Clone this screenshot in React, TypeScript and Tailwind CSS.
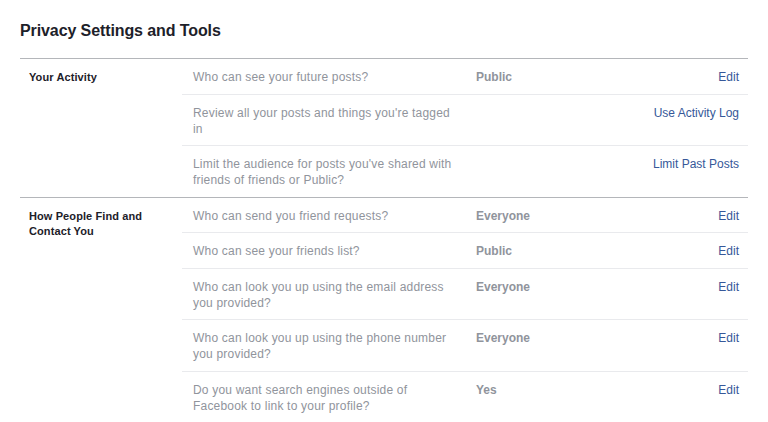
import React from 'react';

interface Row {
  question: string;
  value?: string;
  action: string;
}

interface Section {
  title: string;
  rows: Row[];
}

const sections: Section[] = [
  {
    title: 'Your Activity',
    rows: [
      { question: 'Who can see your future posts?', value: 'Public', action: 'Edit' },
      { question: "Review all your posts and things you're tagged in", action: 'Use Activity Log' },
      { question: "Limit the audience for posts you've shared with friends of friends or Public?", action: 'Limit Past Posts' },
    ],
  },
  {
    title: 'How People Find and Contact You',
    rows: [
      { question: 'Who can send you friend requests?', value: 'Everyone', action: 'Edit' },
      { question: 'Who can see your friends list?', value: 'Public', action: 'Edit' },
      { question: 'Who can look you up using the email address you provided?', value: 'Everyone', action: 'Edit' },
      { question: 'Who can look you up using the phone number you provided?', value: 'Everyone', action: 'Edit' },
      { question: 'Do you want search engines outside of Facebook to link to your profile?', value: 'Yes', action: 'Edit' },
    ],
  },
];

export default function App() {
  return (
    <div
      className="min-h-screen bg-white px-[20px] pt-[21px]"
      style={{ fontFamily: '"Liberation Sans", Arial, sans-serif' }}
    >
      <h2 className="text-[16px] leading-[20px] font-bold tracking-[-0.1px] text-[#1d2129] mb-[17px]">
        Privacy Settings and Tools
      </h2>

      <div className="w-[728px]">
        {sections.map((section) => (
          <div key={section.title} className="flex border-t border-[#b4b6ba]">
            {/* Section label */}
            <div className="w-[162px] shrink-0 pl-[9px] pt-[11px] text-[11px] leading-[15px] font-bold tracking-[0.1px] text-[#1d2129]">
              <div className="w-[130px]">{section.title}</div>
            </div>

            {/* Rows */}
            <div className="flex-1">
              {section.rows.map((row, i) => (
                <div
                  key={row.question}
                  className={`flex pt-[10px] pb-[8.5px] text-[12px] leading-[16px] ${
                    i < section.rows.length - 1 ? 'border-b border-[#e9eaed]' : ''
                  }`}
                >
                  <div className="w-[294px] shrink-0 pl-[11px] pr-[18px] tracking-[0.2px] text-[#90949c]">
                    {row.question}
                  </div>
                  <div className="w-[120px] shrink-0 font-bold text-[#90949c]">{row.value}</div>
                  <div className="flex-1 text-right pr-[9px] text-[#365899]">{row.action}</div>
                </div>
              ))}
            </div>
          </div>
        ))}
      </div>
    </div>
  );
}
